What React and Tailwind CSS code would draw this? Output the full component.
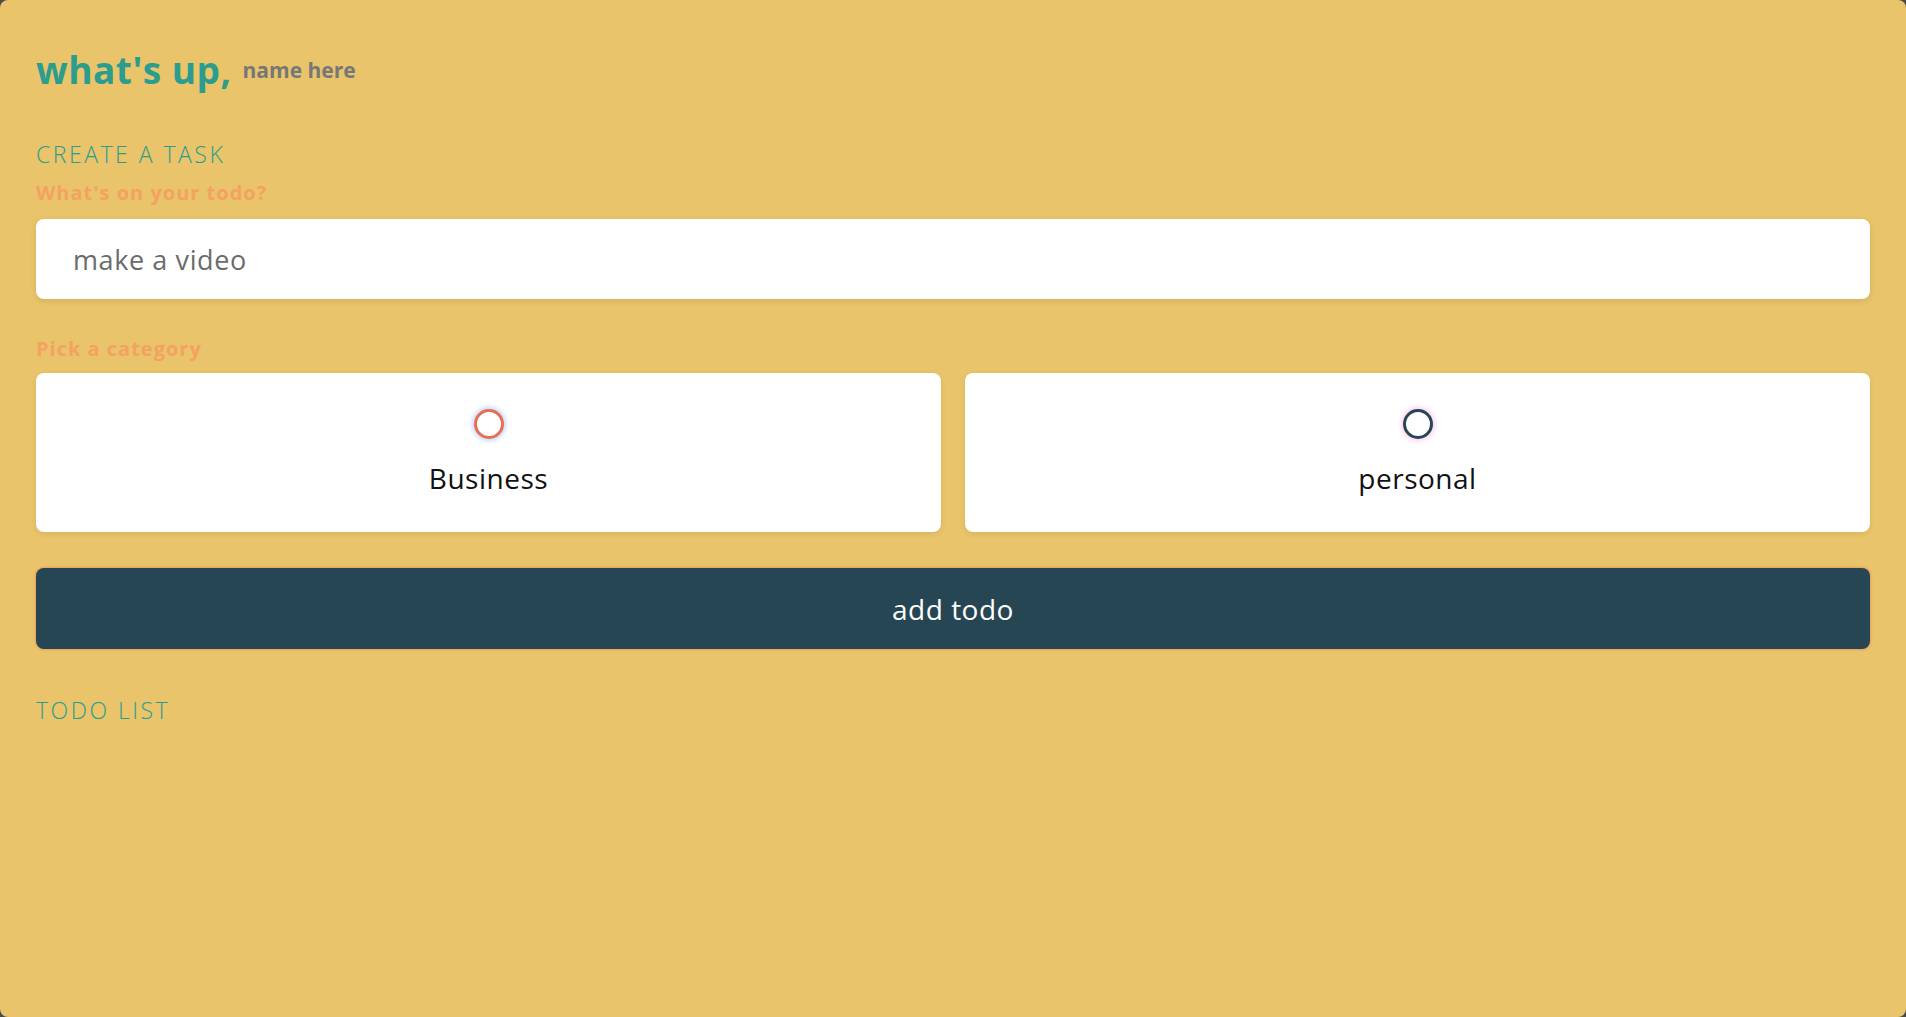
import React, { useState } from 'react'

const font = { fontFamily: '"Open Sans", "DejaVu Sans", sans-serif' }

const CategoryCard = ({ label, ringClass, checked, onPick }) => {
  return (
    <label
      onClick={onPick}
      className="flex-1 h-[159px] bg-white rounded-[8px] shadow-[0_2px_6px_rgba(0,0,0,0.08)] flex flex-col items-center cursor-pointer"
    >
      <span className={`mt-[36px] w-[30px] h-[30px] rounded-full border-[3px] bg-white ${ringClass}`}>
        {checked && <span className="block w-full h-full rounded-full scale-50 bg-current" />}
      </span>
      <span className="mt-[19px] text-[28px] leading-[40px] tracking-[0.5px] text-[#111111]">{label}</span>
    </label>
  )
}

export default function App() {
  const [category, setCategory] = useState('')
  const [todo, setTodo] = useState('')

  return (
    <div className="w-full h-[1017px] bg-[#4a4a4a]" style={font}>
      <main className="w-full h-full bg-[#e9c46a] rounded-[8px] px-[36px] flex flex-col">
        <section className="pt-[48px] flex items-center">
          <h1 className="text-[37px] leading-[44px] font-bold text-[#2a9d8f] tracking-[0.5px]">what's up,</h1>
          <span className="ml-[11px] text-[21px] leading-[28px] font-bold text-[#777777]">name here</span>
        </section>

        <h2 className="mt-[47px] text-[23px] leading-[30px] font-light text-[#2a9d8f] tracking-[2.5px]">CREATE A TASK</h2>
        <p className="mt-[12px] text-[20px] leading-[24px] font-bold text-[#f4a261] tracking-[1px]">What's on your todo?</p>

        <input
          value={todo}
          onChange={e => setTodo(e.target.value)}
          placeholder="make a video"
          className="mt-[14px] h-[80px] w-full bg-white rounded-[8px] px-[37px] text-[27px] tracking-[0.6px] text-[#555555] placeholder:text-[#6b6b6b] outline-none shadow-[0_2px_6px_rgba(0,0,0,0.1)]"
        />

        <p className="mt-[38px] text-[20px] leading-[24px] font-bold text-[#f4a261] tracking-[1px]">Pick a category</p>
        <div className="mt-[12px] flex gap-[24px]">
          <CategoryCard
            label="Business"
            ringClass="border-[#e76f51] text-[#e76f51] shadow-[0_0_4px_2px_rgba(90,140,255,0.35)]"
            checked={category === 'business'}
            onPick={() => setCategory('business')}
          />
          <CategoryCard
            label="personal"
            ringClass="border-[#264653] text-[#264653] shadow-[0_0_4px_2px_rgba(255,120,200,0.35)]"
            checked={category === 'personal'}
            onPick={() => setCategory('personal')}
          />
        </div>

        <button className="mt-[36px] h-[81px] w-full bg-[#264653] rounded-[8px] text-white text-[28px] tracking-[0.5px] shadow-[0_0_3px_rgba(231,111,81,0.9)]">
          add todo
        </button>

        <h2 className="mt-[46px] text-[23px] leading-[30px] font-light text-[#2a9d8f] tracking-[2.5px]">TODO LIST</h2>
      </main>
    </div>
  )
}
